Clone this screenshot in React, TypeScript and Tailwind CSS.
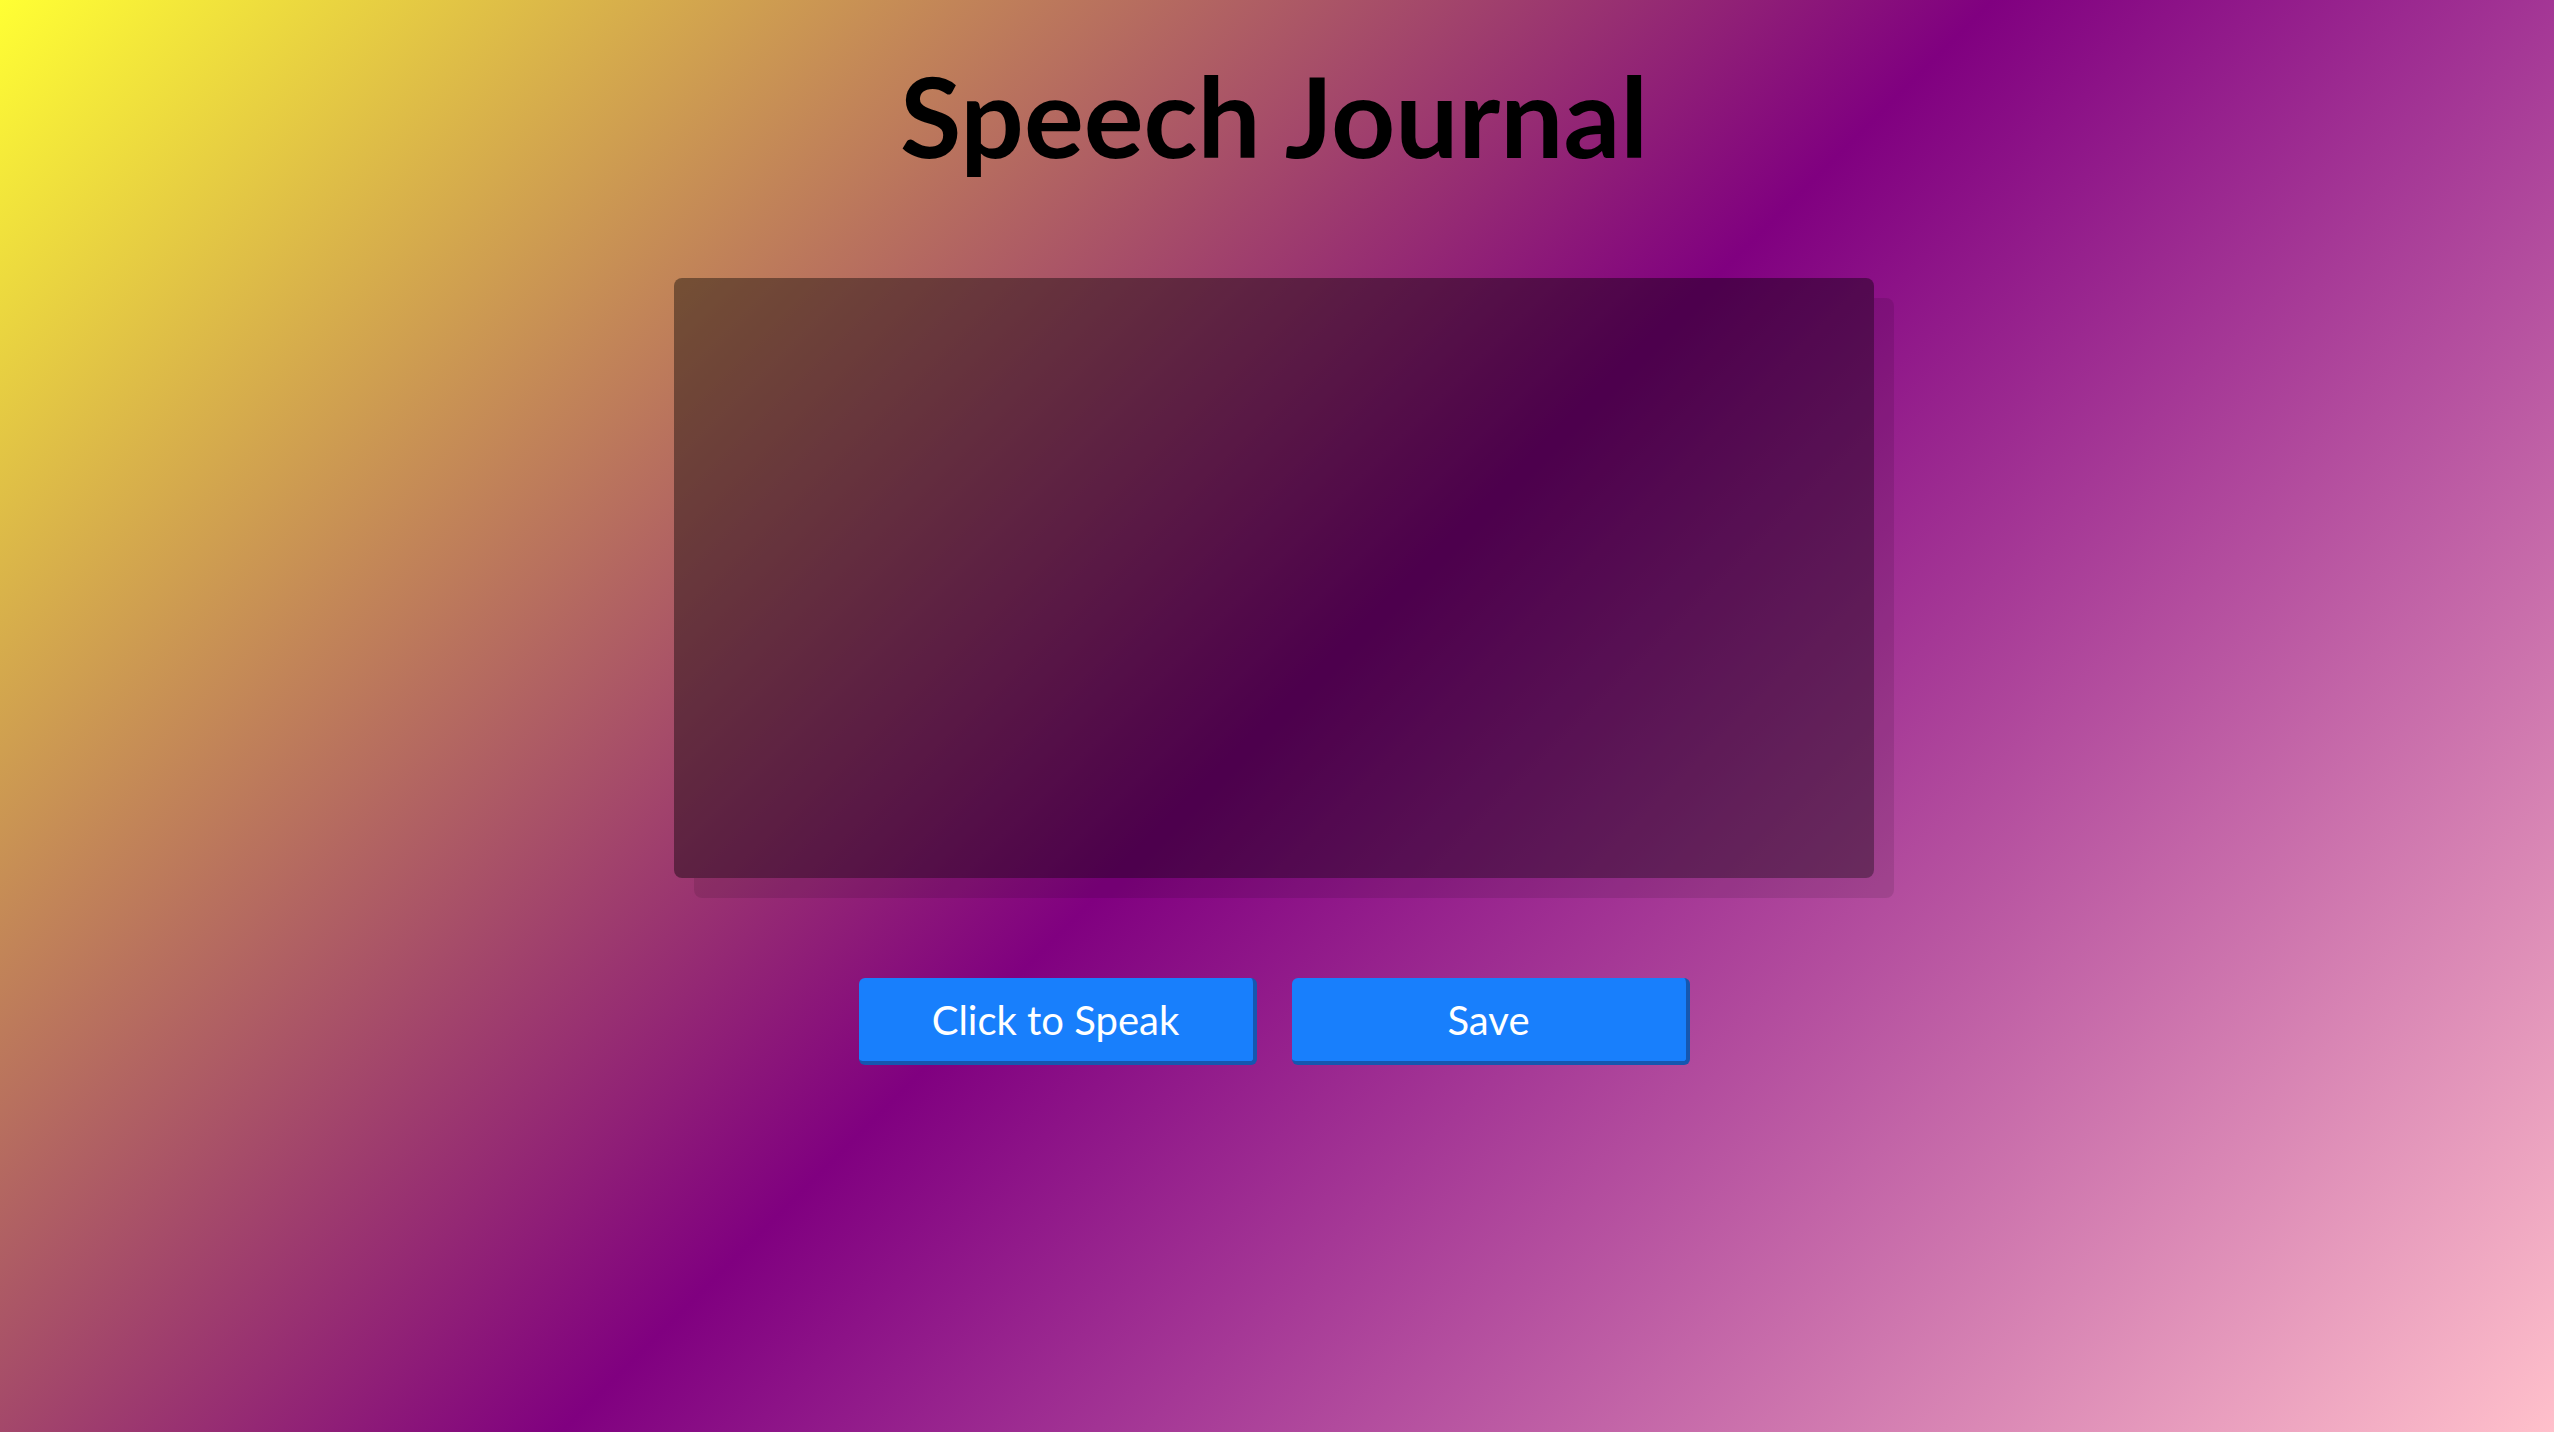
import React from 'react';

export default function App() {
  return (
    <div className="min-h-screen w-full flex flex-col items-center pr-[6px] bg-[linear-gradient(135deg,#ffff33,#800080,#ffc0cb)] font-['Lato','Liberation_Sans',sans-serif]">
      <h1 className="mt-[59px] text-[112px] leading-none font-bold text-black">Speech Journal</h1>

      <textarea
        className="mt-[107px] w-[1200px] h-[600px] resize-none rounded-lg bg-black/40 shadow-[20px_20px_0_rgba(0,0,0,0.1)] outline-none p-4 text-white text-2xl"
      />

      <div className="mt-[100px] flex gap-[35px]">
        <button className="w-[398px] h-[87px] rounded-md bg-[#187ffc] border-r-4 border-b-4 border-[#1557b0] text-white text-[40px] flex items-center justify-center">
          Click to Speak
        </button>
        <button className="w-[398px] h-[87px] rounded-md bg-[#187ffc] border-r-4 border-b-4 border-[#1557b0] text-white text-[40px] flex items-center justify-center">
          Save
        </button>
      </div>
    </div>
  );
}
